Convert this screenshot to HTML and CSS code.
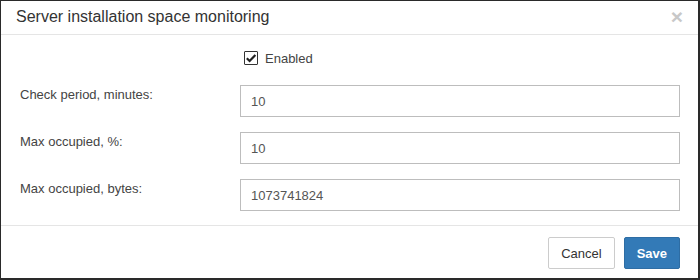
FILE: index.html
```html
<!DOCTYPE html>
<html lang="en">
<head>
    <meta charset="UTF-8">
    <meta name="viewport" content="width=device-width, initial-scale=1.0">
    <title>Server installation space monitoring</title>
    <link rel="stylesheet" href="styles.css">
</head>
<body>
    <div class="modal">
        <div class="modal-header">
            <h4 class="modal-title">Server installation space monitoring</h4>
            <button type="button" class="close">&times;</button>
        </div>

        <form class="modal-body">
            <div class="form-row">
                <span class="form-label"></span>
                <label class="check">
                    <span class="check-box">
                        <svg width="12" height="12" viewBox="0 0 12 12">
                            <path d="M1.8 6.2 L4.6 9 L10.4 3" fill="none" stroke="#222" stroke-width="2.2"/>
                        </svg>
                    </span>
                    Enabled
                </label>
            </div>

            <div class="form-row">
                <label class="form-label" for="period">Check period, minutes:</label>
                <input type="text" id="period" class="form-control" value="10">
            </div>

            <div class="form-row">
                <label class="form-label" for="percent">Max occupied, %:</label>
                <input type="text" id="percent" class="form-control" value="10">
            </div>

            <div class="form-row">
                <label class="form-label" for="bytes">Max occupied, bytes:</label>
                <input type="text" id="bytes" class="form-control" value="1073741824">
            </div>
        </form>

        <div class="modal-footer">
            <button type="button" class="btn btn-default">Cancel</button>
            <button type="button" class="btn btn-primary">Save</button>
        </div>
    </div>
</body>
</html>
```

FILE: styles.css
```css
* {
    margin: 0;
    padding: 0;
    box-sizing: border-box;
}

body {
    font-family: "Liberation Sans", Arial, Helvetica, sans-serif;
    font-size: 13px;
    background: #2a2a2a;
    width: 700px;
    height: 280px;
    overflow: hidden;
}

.modal {
    background: #fff;
    width: 697px;
    height: 277px;
    margin: 1px 0 0 1px;
    display: flex;
    flex-direction: column;
}

.modal-header {
    display: flex;
    justify-content: space-between;
    align-items: flex-start;
    padding: 4px 15px 5px 15px;
    border-bottom: 1px solid #e5e5e5;
}

.modal-title {
    font-size: 16px;
    font-weight: normal;
    line-height: 24px;
    color: #333;
}

.close {
    background: none;
    border: none;
    font-family: "Liberation Sans", Arial, sans-serif;
    font-size: 21px;
    font-weight: bold;
    line-height: 21px;
    color: #c8c8c8;
    margin-top: 1px;
    cursor: pointer;
}

.modal-body {
    padding: 13px 18px 14px 19px;
    display: flex;
    flex-direction: column;
    gap: 15px;
}

.form-row {
    display: flex;
    align-items: flex-start;
}

.form-row:first-child {
    margin-bottom: 2px;
}

.form-label {
    width: 220px;
    flex: none;
    padding-top: 1px;
    line-height: 18.57px;
    color: #444;
}

.check {
    display: flex;
    align-items: center;
    gap: 7px;
    margin-left: 4px;
    height: 20px;
    color: #444;
}

.check-box {
    width: 14px;
    height: 14px;
    border: 1px solid #333;
    border-radius: 1px;
    display: flex;
    align-items: center;
    justify-content: center;
}

.form-control {
    flex: 1;
    height: 32px;
    border: 1px solid #bdbdbd;
    padding: 0 10px;
    font-family: inherit;
    font-size: 13px;
    color: #555;
    outline: none;
}

.modal-footer {
    border-top: 1px solid #e5e5e5;
    padding: 11px 18px 0 0;
    display: flex;
    justify-content: flex-end;
    gap: 9px;
}

.btn {
    height: 32px;
    padding: 0 12px;
    font-family: inherit;
    font-size: 13px;
    border-radius: 2px;
    border: 1px solid #ccc;
    cursor: pointer;
}

.btn-default {
    background: #fff;
    color: #333;
}

.btn-primary {
    background: #337ab7;
    border-color: #2e6da4;
    color: #fff;
    font-weight: bold;
}
```
